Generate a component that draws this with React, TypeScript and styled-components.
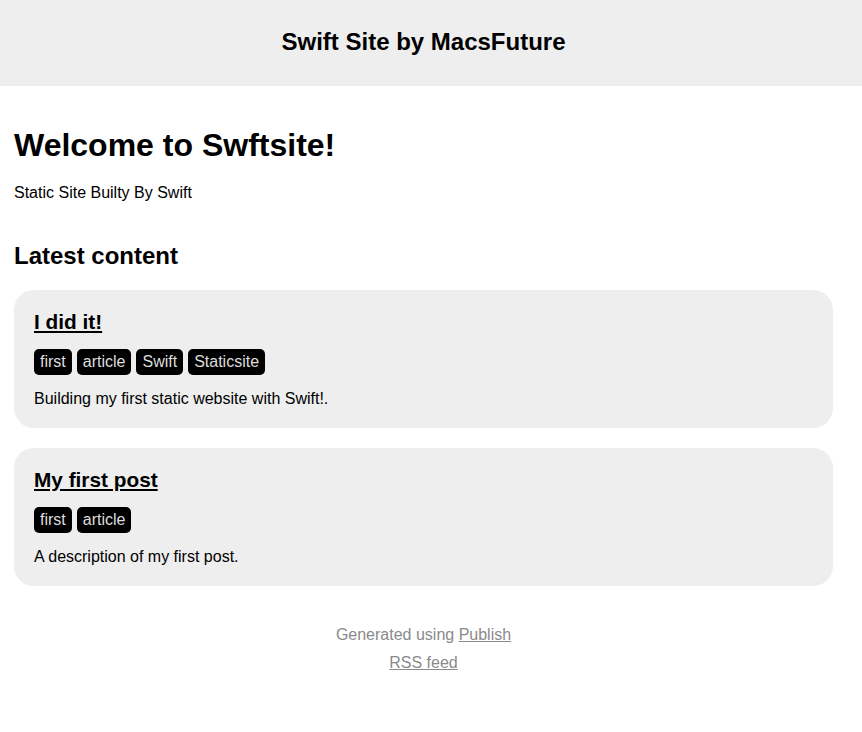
import React from "react";
import styled, { createGlobalStyle } from "styled-components";

const GlobalStyle = createGlobalStyle`
  * {
    margin: 0;
    padding: 0;
    box-sizing: border-box;
  }

  body {
    background: #fff;
    color: #000;
    font-family: "Liberation Sans", Helvetica, Arial, sans-serif;
    text-align: center;
  }
`;

type Item = {
  title: string;
  tags: string[];
  description: string;
};

const items: Item[] = [
  {
    title: "I did it!",
    tags: ["first", "article", "Swift", "Staticsite"],
    description: "Building my first static website with Swift!.",
  },
  {
    title: "My first post",
    tags: ["first", "article"],
    description: "A description of my first post.",
  },
];

export default function App() {
  return (
    <>
      <GlobalStyle />
      <Header>
        <Wrapper $center $compact>
          <SiteName href="#">Swift Site by MacsFuture</SiteName>
        </Wrapper>
      </Header>

      <Wrapper>
        <Title>Welcome to Swftsite!</Title>
        <Description>Static Site Builty By Swift</Description>
        <SectionTitle>Latest content</SectionTitle>

        <ItemList>
          {items.map((item) => (
            <ItemCard key={item.title}>
              <article>
                <ItemTitle>
                  <a href="#">{item.title}</a>
                </ItemTitle>
                <TagList>
                  {item.tags.map((tag) => (
                    <Tag key={tag}>
                      <a href="#">{tag}</a>
                    </Tag>
                  ))}
                </TagList>
                <ItemText>{item.description}</ItemText>
              </article>
            </ItemCard>
          ))}
        </ItemList>
      </Wrapper>

      <Footer>
        <Wrapper $center $footer>
          <FooterLine>
            Generated using <a href="#">Publish</a>
          </FooterLine>
          <FooterLine>
            <a href="#">RSS feed</a>
          </FooterLine>
        </Wrapper>
      </Footer>
    </>
  );
}

const Wrapper = styled.div<{ $center?: boolean; $compact?: boolean; $footer?: boolean }>`
  max-width: 900px;
  margin: 0 auto;
  padding: ${(p) => (p.$compact ? "28px" : p.$footer ? "0" : "41px")} 29px
    40px 14px;
  padding-bottom: ${(p) => (p.$compact ? "30px" : "40px")};
  text-align: ${(p) => (p.$center ? "center" : "left")};
`;

const Header = styled.header`
  background-color: #eee;
`;

const SiteName = styled.a`
  display: block;
  font-size: 24px;
  line-height: 28px;
  font-weight: bold;
  color: #000;
  text-decoration: none;
`;

const Title = styled.h1`
  font-size: 32px;
  line-height: 37px;
  margin-bottom: 20px;
`;

const Description = styled.p`
  font-size: 16px;
  line-height: 18px;
  margin-bottom: 40px;
`;

const SectionTitle = styled.h2`
  font-size: 24px;
  line-height: 28px;
  margin-bottom: 20px;
`;

const ItemList = styled.ul`
  list-style: none;
`;

const ItemCard = styled.li`
  display: block;
  padding: 20px;
  border-radius: 20px;
  background-color: #eee;
  margin-bottom: 20px;

  &:last-child {
    margin-bottom: 0;
  }
`;

const ItemTitle = styled.h1`
  font-size: 20.8px;
  line-height: 24px;
  margin-bottom: 15px;

  a {
    color: #000;
  }
`;

const TagList = styled.ul`
  display: flex;
  list-style: none;
  margin-bottom: 15px;
`;

const Tag = styled.li`
  display: inline-block;
  background-color: #000;
  color: #ddd;
  padding: 4px 6px;
  border-radius: 5px;
  margin-right: 5px;
  font-size: 16px;
  line-height: 18px;

  a {
    color: inherit;
    text-decoration: none;
  }
`;

const ItemText = styled.p`
  font-size: 16px;
  line-height: 18px;
`;

const Footer = styled.footer`
  color: #8a8a8a;
`;

const FooterLine = styled.p`
  font-size: 16px;
  line-height: 18px;
  margin-bottom: 10px;

  a {
    color: inherit;
  }
`;
